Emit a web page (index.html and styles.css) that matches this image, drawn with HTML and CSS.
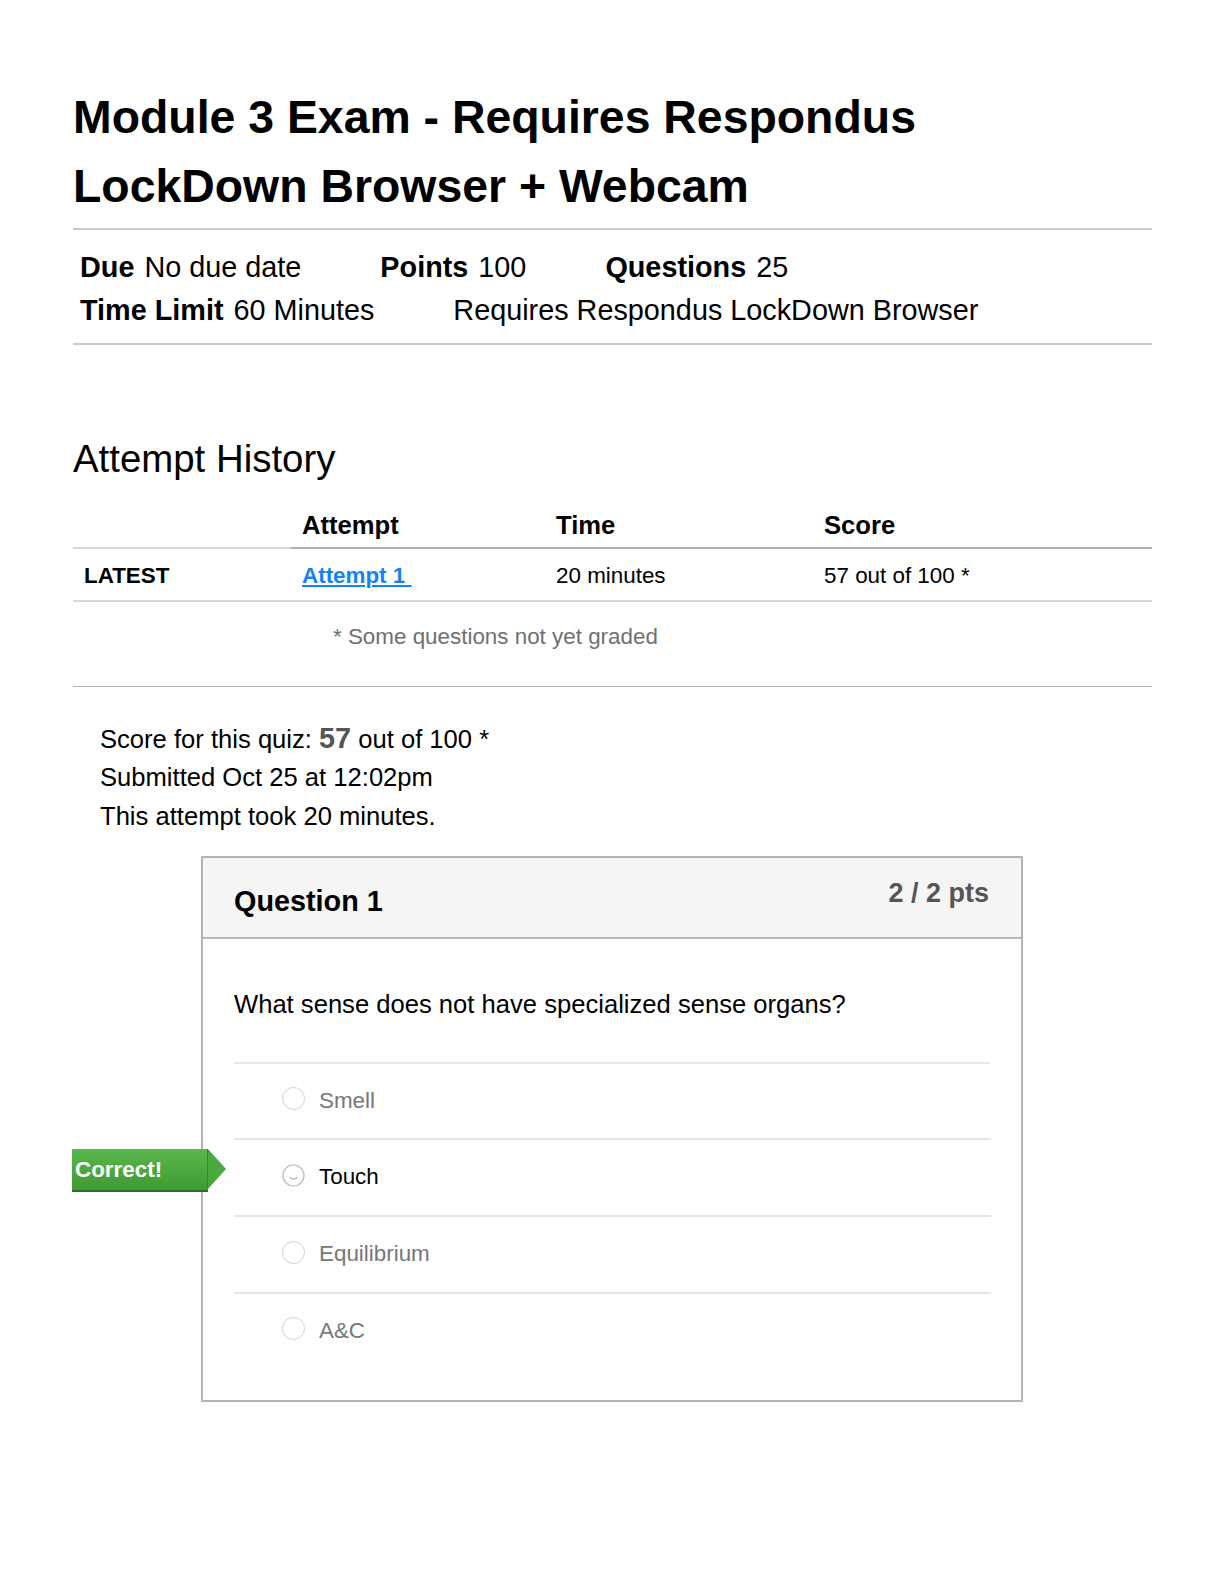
FILE: index.html
```html
<!DOCTYPE html>
<html lang="en">
<head>
<meta charset="utf-8">
<title>Module 3 Exam</title>
<link rel="stylesheet" href="styles.css">
</head>
<body>
<div class="page">
  <h1 class="title">Module 3 Exam - Requires Respondus LockDown Browser + Webcam</h1>
  <div class="rule"></div>
  <div class="details">
    <div class="details-row">
      <div class="detail"><span class="label">Due</span>No due date</div>
      <div class="detail"><span class="label">Points</span>100</div>
      <div class="detail"><span class="label">Questions</span>25</div>
    </div>
    <div class="details-row">
      <div class="detail"><span class="label">Time Limit</span>60 Minutes</div>
      <div class="detail">Requires Respondus LockDown Browser</div>
    </div>
  </div>
  <div class="rule"></div>

  <h2 class="history-title">Attempt History</h2>
  <table class="history">
    <thead>
      <tr>
        <th class="c1"></th>
        <th class="c2">Attempt</th>
        <th class="c3">Time</th>
        <th class="c4">Score</th>
      </tr>
    </thead>
    <tbody>
      <tr>
        <td class="latest">LATEST</td>
        <td><a class="attempt-link" href="#">Attempt 1&nbsp;</a></td>
        <td>20 minutes</td>
        <td>57 out of 100 *</td>
      </tr>
    </tbody>
  </table>
  <div class="footnote">* Some questions not yet graded</div>
  <div class="rule thin"></div>

  <div class="score">
    <div>Score for this quiz: <span class="score-num">57</span> out of 100 *</div>
    <div>Submitted Oct 25 at 12:02pm</div>
    <div>This attempt took 20 minutes.</div>
  </div>

  <div class="question">
    <div class="q-header">
      <span class="q-pts">2 / 2 pts</span>
      <span class="q-name">Question 1</span>
    </div>
    <div class="q-body">
      <div class="q-text">What sense does not have specialized sense organs?</div>
      <div class="answers">
        <div class="answer">
          <span class="radio"></span><span class="answer-text">Smell</span>
        </div>
        <div class="answer selected">
          <span class="correct-badge">Correct!</span>
          <svg class="radio-svg" width="23" height="23" viewBox="0 0 23 23"><circle cx="11.5" cy="11.5" r="10.5" fill="#fff" stroke="#b9b9b9" stroke-width="1.2"/><path d="M7.5 13.2 Q11.5 17 15.5 13.2" fill="none" stroke="#9a9a9a" stroke-width="1"/></svg><span class="answer-text">Touch</span>
        </div>
        <div class="answer">
          <span class="radio"></span><span class="answer-text">Equilibrium</span>
        </div>
        <div class="answer">
          <span class="radio"></span><span class="answer-text">A&amp;C</span>
        </div>
      </div>
    </div>
  </div>
</div>
</body>
</html>
```

FILE: styles.css
```css
* { box-sizing: border-box; }
html, body { margin: 0; padding: 0; background: #fff; }
body {
  font-family: "Liberation Sans", Arial, Helvetica, sans-serif;
  color: #000;
}
.page {
  width: 1224px;
  padding: 83px 72px 120px 73px;
}
.title {
  margin: 0;
  max-width: 960px;
  font-size: 46.4px;
  line-height: 69px;
  font-weight: 700;
}
.rule {
  margin-top: 7px;
  border-top: 2px solid #cbcbcb;
}
.details {
  padding: 16px 0 11px 7px;
  font-size: 28.8px;
  line-height: 43px;
}
.details + .rule { margin-top: 0; }
.details-row {
  display: flex;
  gap: 79px;
}
.label {
  font-weight: 700;
  margin-right: 10px;
}
.history-title {
  margin: 91px 0 0;
  font-size: 38.4px;
  line-height: 46px;
  font-weight: 400;
}
.history {
  margin-top: 24px;
  width: 100%;
  border-collapse: collapse;
  table-layout: fixed;
}
.history th {
  text-align: left;
  font-size: 25.6px;
  line-height: 38px;
  font-weight: 700;
  padding: 0 11px 3px;
  border-bottom: 2px solid #a9b2b9;
}
.history th.c1 { width: 218px; border-bottom-color: #d3d9dd; }
.history th.c2 { width: 254px; }
.history th.c3 { width: 268px; }
.history td {
  font-size: 22.4px;
  line-height: 32px;
  padding: 11px 11px 8px;
  border-bottom: 2px solid #d6dadd;
}
.history td.latest { font-weight: 700; }
.attempt-link {
  color: #1482f0;
  font-weight: 700;
  text-decoration: underline;
}
.footnote {
  padding: 19px 0 33px 260px;
  font-size: 22.4px;
  line-height: 32px;
  color: #707070;
}
.rule.thin {
  margin-top: 0;
  border-top: 1px solid #b5b5b5;
}
.score {
  margin-top: 33px;
  padding-left: 27px;
  font-size: 25.6px;
  line-height: 38.4px;
}
.score-num {
  font-size: 28.8px;
  font-weight: 700;
  color: #555;
  line-height: 30px;
}
.question {
  margin: 21px 0 0 128px;
  width: 822px;
  border: 2px solid #b3b3b3;
}
.q-header {
  background: #f5f5f5;
  border-bottom: 2px solid #b9b9b9;
  padding: 23px 32px 16px 31px;
  height: 81px;
}
.q-name {
  display: block;
  font-size: 28.8px;
  line-height: 40px;
  font-weight: 700;
}
.q-pts {
  float: right;
  margin-top: -6px;
  font-size: 27px;
  line-height: 36px;
  font-weight: 700;
  color: #555;
}
.q-body {
  padding: 46px 30px 32px 31px;
}
.q-text {
  font-size: 25.6px;
  line-height: 38.4px;
}
.answers {
  margin-top: 38px;
}
.answer {
  position: relative;
  display: flex;
  align-items: center;
  border-top: 2px solid #e6e6e6;
  padding: 21px 0 21.7px 48px;
  height: 76.7px;
}
.answer:first-child { border-top-color: #e9e9e9; }
.radio {
  width: 23px;
  height: 23px;
  border-radius: 50%;
  border: 1.5px solid #d2d2d2;
  flex: none;
  margin-top: -4px;
}
.radio-svg {
  flex: none;
  margin-top: -4px;
}
.answer-text {
  margin-left: 14px;
  font-size: 22.4px;
  line-height: 32px;
  color: #777;
}
.answer.selected .answer-text { color: #000; }
.correct-badge {
  position: absolute;
  left: -162px;
  top: 9px;
  width: 136px;
  height: 43px;
  padding-left: 3px;
  font-size: 22.4px;
  line-height: 42px;
  font-weight: 700;
  color: #fff;
  background: linear-gradient(#5bb84b, #3f9a34);
  border-bottom: 2px solid #2f6d28;
  border-right: 1px solid #3a8630;
}
.correct-badge::after {
  content: "";
  position: absolute;
  right: -19px;
  top: 0;
  border-left: 18px solid #4aa83e;
  border-top: 20.5px solid transparent;
  border-bottom: 20.5px solid transparent;
}
```
